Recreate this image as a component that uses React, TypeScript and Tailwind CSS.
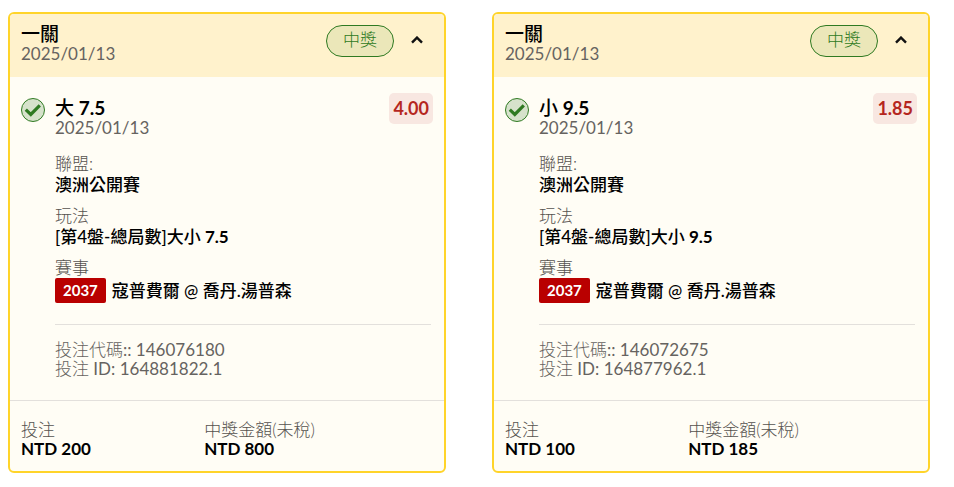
import { useState } from 'react';

interface Bet {
  side: string;
  line: string;
  odds: string;
  date: string;
  league: string;
  market: string;
  code: string;
  match: string;
  betCode: string;
  betId: string;
  stake: string;
  payout: string;
}

const bets: Bet[] = [
  {
    side: '大',
    line: '7.5',
    odds: '4.00',
    date: '2025/01/13',
    league: '澳洲公開賽',
    market: '[第4盤-總局數]大小',
    code: '2037',
    match: '寇普費爾 @ 喬丹.湯普森',
    betCode: '146076180',
    betId: '164881822.1',
    stake: 'NTD 200',
    payout: 'NTD 800',
  },
  {
    side: '小',
    line: '9.5',
    odds: '1.85',
    date: '2025/01/13',
    league: '澳洲公開賽',
    market: '[第4盤-總局數]大小',
    code: '2037',
    match: '寇普費爾 @ 喬丹.湯普森',
    betCode: '146072675',
    betId: '164877962.1',
    stake: 'NTD 100',
    payout: 'NTD 185',
  },
];

function WonIcon() {
  return (
    <svg viewBox="0 0 24 24" className="size-6 shrink-0" aria-hidden="true">
      <circle cx="12" cy="12" r="11.5" fill="#d6e2cb" stroke="#2f7a22" />
      <path d="M4.8 11.6 L9.8 16.4 L18.8 7.4" fill="none" stroke="#2f7a22" strokeWidth="3.2" />
    </svg>
  );
}

function Field({ label, children }: { label: string; children: React.ReactNode }) {
  return (
    <div>
      <dt className="font-light text-[#56534f]">{label}</dt>
      <dd className="font-medium">{children}</dd>
    </div>
  );
}

function BetCard({ bet }: { bet: Bet }) {
  const [open, setOpen] = useState(true);

  return (
    <article className="min-w-0 flex-1 overflow-hidden rounded-md border-2 border-[#ffd42a] bg-[#fffdf5]">
      <header className="flex items-start bg-[#fff2cc] pt-[10px] pr-[15px] pb-[13px] pl-[11px]">
        <div className="flex-1">
          <h2 className="text-[19px] leading-5 font-medium">一關</h2>
          <p className="text-[#666360]">{bet.date}</p>
        </div>
        <span className="mt-px flex h-8 w-[68px] justify-center rounded-full border border-[#2f7a22] bg-[#ebe7b9] pt-1 font-light text-[#2f7a22]">
          中獎
        </span>
        <button
          type="button"
          aria-label="一關"
          aria-expanded={open}
          onClick={() => setOpen(!open)}
          className="ml-[11px] flex h-8 w-6 items-center justify-center"
        >
          <svg viewBox="0 0 12 8" className={open ? 'h-2 w-3' : 'h-2 w-3 rotate-180'} aria-hidden="true">
            <path d="M1 6.6 L6 1.6 L11 6.6" fill="none" stroke="#111" strokeWidth="2.4" />
          </svg>
        </button>
      </header>

      {open && (
        <div className="flex gap-[10px] pt-4 pr-[11px] pb-[22px] pl-[11px]">
          <div className="pt-[5px]">
            <WonIcon />
          </div>
          <div className="min-w-0 flex-1">
            <div className="flex items-start">
              <div className="flex-1 pt-[5px]">
                <h3 className="text-[19px] leading-5 font-medium">
                  {bet.side} <span className="font-bold">{bet.line}</span>
                </h3>
                <p className="text-[#666360]">{bet.date}</p>
              </div>
              <span className="rounded-[5px] bg-[#f8e7e1] px-1 py-[5px] text-[18px] leading-[21px] font-bold text-[#b5261e]">
                {bet.odds}
              </span>
            </div>
            <dl className="mt-[15px] flex flex-col gap-[10px] leading-[21px]">
              <Field label="聯盟:">{bet.league}</Field>
              <Field label="玩法">
                {bet.market} <span className="font-bold">{bet.line}</span>
              </Field>
              <Field label="賽事">
                <span className="flex items-center gap-[6px]">
                  <span className="rounded-xs bg-[#b90000] px-2 py-[3px] text-[15px] leading-[19px] font-bold text-white">
                    {bet.code}
                  </span>
                  {bet.match}
                </span>
              </Field>
            </dl>
            <div className="mt-[21px] mr-[2px] border-t border-[#e3e0dc] pt-[15px] leading-[19px] text-[#666360]">
              <p>
                <span className="font-light">投注代碼</span>:: {bet.betCode}
              </p>
              <p>
                <span className="font-light">投注</span> ID: {bet.betId}
              </p>
            </div>
          </div>
        </div>
      )}

      <dl className="flex border-t border-[#e3e0dc] pt-[19px] pr-4 pb-[13px] pl-[11px] leading-[19px]">
        <div className="w-[45%]">
          <Field label="投注">
            <span className="font-bold">{bet.stake}</span>
          </Field>
        </div>
        <Field label="中獎金額(未稅)">
          <span className="font-bold">{bet.payout}</span>
        </Field>
      </dl>
    </article>
  );
}

export default function App() {
  return (
    <main className="flex items-start gap-[46px] bg-white pt-3 pr-6 pb-3 pl-2 font-[Lato,'Noto_Sans_CJK_TC',sans-serif] text-[17px] leading-5 text-black">
      {bets.map((bet) => (
        <BetCard key={bet.betId} bet={bet} />
      ))}
    </main>
  );
}
